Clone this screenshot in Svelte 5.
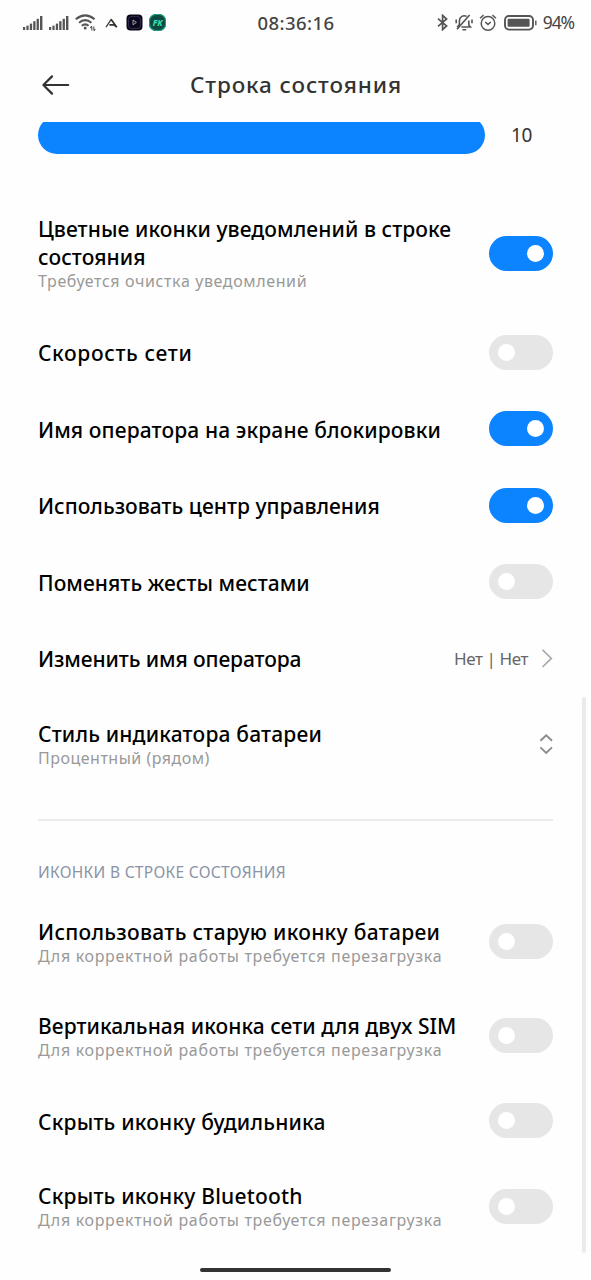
<script lang="ts">
	type Item = {
		title: string;
		sub?: string;
		kind: 'toggle' | 'link' | 'select';
		on?: boolean;
		value?: string;
		// letter spacing of the title and the summary, px
		track: number;
		subTrack?: number;
	};

	let general = $state<Item[]>([
		{ title: 'Цветные иконки уведомлений в строке состояния', sub: 'Требуется очистка уведомлений', kind: 'toggle', on: true, track: 0.08, subTrack: 0.62 },
		{ title: 'Скорость сети', kind: 'toggle', on: false, track: 0.65 },
		{ title: 'Имя оператора на экране блокировки', kind: 'toggle', on: true, track: 0.12 },
		{ title: 'Использовать центр управления', kind: 'toggle', on: true, track: 0.02 },
		{ title: 'Поменять жесты местами', kind: 'toggle', on: false, track: 0.06 },
		{ title: 'Изменить имя оператора', kind: 'link', value: 'Нет | Нет', track: -0.1 },
		{ title: 'Стиль индикатора батареи', sub: 'Процентный (рядом)', kind: 'select', track: 0.18, subTrack: 0.5 }
	]);

	let icons = $state<Item[]>([
		{ title: 'Использовать старую иконку батареи', sub: 'Для корректной работы требуется перезагрузка', kind: 'toggle', on: false, track: 0.3, subTrack: 0.68 },
		{ title: 'Вертикальная иконка сети для двух SIM', sub: 'Для корректной работы требуется перезагрузка', kind: 'toggle', on: false, track: 0.06, subTrack: 0.68 },
		{ title: 'Скрыть иконку будильника', kind: 'toggle', on: false, track: 0.2 },
		{ title: 'Скрыть иконку Bluetooth', sub: 'Для корректной работы требуется перезагрузка', kind: 'toggle', on: false, track: 0.2, subTrack: 0.68 }
	]);
</script>

{#snippet signal()}
	<svg width="20" height="14" viewBox="0 0 20 14" fill="#555">
		<rect x="0" y="11" width="2.2" height="3" />
		<rect x="3.4" y="9.6" width="2.2" height="4.4" />
		<rect x="6.8" y="7.6" width="2.3" height="6.4" />
		<rect x="10.2" y="5.2" width="2.3" height="8.8" />
		<rect x="13.6" y="2.8" width="2.3" height="11.2" />
		<rect x="17" y="0" width="2.4" height="14" />
	</svg>
{/snippet}

{#snippet row(item: Item)}
	<div class="row" class:tall={item.sub}>
		<div class="label">
			<div class="title" style:letter-spacing="{item.track}px">{item.title}</div>
			{#if item.sub}
				<div class="sub" style:letter-spacing="{item.subTrack}px">{item.sub}</div>
			{/if}
		</div>
		{#if item.kind === 'toggle'}
			<button class="toggle" class:on={item.on} aria-label={item.title} onclick={() => (item.on = !item.on)}>
				<span class="knob"></span>
			</button>
		{:else if item.kind === 'link'}
			<span class="value">{item.value}</span>
			<svg width="12" height="20" viewBox="0 0 12 20" fill="none" stroke="#a8a8a8" stroke-width="1.6">
				<path d="M1.5 1.8L10.4 10.4L1.5 19" />
			</svg>
		{:else}
			<svg width="14" height="22" viewBox="0 0 14 22" fill="none" stroke="#8c8c8c" stroke-width="1.9">
				<path d="M1.4 7.8L7.2 2.2L13 7.8M1.4 14.4L7.2 20L13 14.4" />
			</svg>
		{/if}
	</div>
{/snippet}

<div class="screen">
	<div class="statusbar">
		<div class="left">
			{@render signal()}
			{@render signal()}
			<svg class="wifi" width="22" height="18" viewBox="0 0 22 18" fill="none" stroke="#555" stroke-width="2.1">
				<path d="M0.8 5.2Q10.2 -2.4 19.6 5.2" />
				<path d="M4 8.7Q10.2 3.6 16.4 8.7" />
				<path d="M6.8 11.8Q10.2 9 13.6 11.8" />
				<circle cx="10.2" cy="14" r="1.5" fill="#555" stroke="none" />
				<path d="M16.8 16.6V12.4M15.2 14L16.8 12.2M18.8 12.4V16.6M20.4 15L18.8 16.8" stroke-width="1.1" />
			</svg>
			<svg class="caret" width="13" height="10" viewBox="0 0 13 10" fill="none" stroke="#333">
				<path d="M1 9.2L6.4 1.2" stroke-width="1.2" />
				<path d="M6 1.2L11.8 9.2L8.6 6.6L4.4 6.8" stroke-width="1.7" />
			</svg>
			<svg class="app" width="17" height="17" viewBox="0 0 17 17">
				<rect x="0.5" y="0.5" width="16" height="16" rx="4" fill="#0a0716" />
				<rect x="2.6" y="2.6" width="11.8" height="11.8" rx="2.6" fill="none" stroke="#34305e" stroke-width="0.9" />
				<path d="M7 6L10.4 8.4L7 10.8Z" fill="none" stroke="#b9a9c8" stroke-width="0.9" />
			</svg>
			<span class="fk">FK</span>
		</div>
		<div class="clock">08:36:16</div>
		<div class="right">
			<svg width="11" height="17" viewBox="0 0 11 17" fill="none" stroke="#555" stroke-width="1.7">
				<path d="M1 4.6L9.6 12L5.6 15.6V1.4L9.6 5L1 12.4" />
			</svg>
			<svg class="bell" width="18" height="17" viewBox="0 0 18 17" fill="none" stroke="#555" stroke-width="1.6">
				<path d="M6.4 13H15.4L13.8 11V6.4M11.6 2.4A4.8 4.8 0 0 0 4.4 6.4V10.6L2.2 13.2" />
				<path d="M7.4 15.8H11.2M1.2 5.4V9.2M17 5.4V9.2M2 15.2L14.6 1" />
			</svg>
			<svg class="alarm" width="18" height="17" viewBox="0 0 18 17" fill="none" stroke="#555" stroke-width="1.5">
				<circle cx="9" cy="9.4" r="6.8" />
				<path d="M6.2 8L9 10.4L11.8 8M1 4.2L4.6 1.1M17 4.2L13.4 1.1" />
			</svg>
			<svg class="battery" width="33" height="16" viewBox="0 0 33 16">
				<rect x="1" y="1" width="28" height="13.6" rx="4" fill="none" stroke="#555" stroke-width="1.9" />
				<rect x="3.6" y="3.8" width="22" height="8" rx="1.2" fill="#555" />
				<rect x="31" y="5.6" width="1.6" height="4.6" fill="#666" />
			</svg>
			<span class="percent">94%</span>
		</div>
	</div>

	<header>
		<svg class="back" width="28" height="20" viewBox="0 0 28 20" fill="none" stroke="#333" stroke-width="2.2" stroke-linecap="round" stroke-linejoin="round">
			<path d="M26.2 10H1.4M10 1.4L1.4 10L10 18.6" />
		</svg>
		<h1>Строка состояния</h1>
	</header>

	<main>
		<div class="slider">
			<div class="bar"></div>
			<span class="amount">10</span>
		</div>
		{#each general as item (item.title)}
			{@render row(item)}
		{/each}
		<hr />
		<h2>ИКОНКИ В СТРОКЕ СОСТОЯНИЯ</h2>
		{#each icons as item (item.title)}
			{@render row(item)}
		{/each}
		<div class="scrollbar"></div>
	</main>
	<div class="home"></div>
</div>

<style>
	:global(body) {
		background: #fefefe;
	}
	.screen {
		position: relative;
		display: flex;
		flex-direction: column;
		box-sizing: border-box;
		width: 591px;
		height: 1280px;
		overflow: hidden;
		background: #fefefe;
		font-family: 'Noto Sans', 'Open Sans', sans-serif;
		color: #000;
	}
	.statusbar {
		display: grid;
		grid-template-columns: 1fr auto 1fr;
		align-items: center;
		height: 45px;
		padding: 0 17px 0 18px;
		flex-shrink: 0;
		color: #444;
	}
	.left,
	.right {
		display: flex;
		align-items: center;
	}
	.left {
		gap: 6px;
		padding-left: 5px;
	}
	.right {
		justify-content: flex-end;
	}
	.caret {
		margin-left: 2px;
	}
	.app {
		margin-left: 2px;
	}
	.fk {
		width: 17px;
		height: 17px;
		border-radius: 7px;
		background: #0f4a42;
		box-shadow: inset 0 0 0 1px #19a583;
		color: #3fe0b4;
		font-size: 8.5px;
		font-weight: 700;
		font-style: italic;
		line-height: 17px;
		text-align: center;
	}
	.clock {
		font-size: 18.5px;
		font-weight: 500;
		line-height: 24px;
		letter-spacing: 0.4px;
	}
	.bell {
		margin-left: 7px;
	}
	.alarm {
		margin-left: 6px;
	}
	.battery {
		margin-left: 7px;
	}
	.percent {
		margin-left: 6px;
		margin-top: -2px;
		font-size: 17.5px;
		line-height: 24px;
		letter-spacing: -1.1px;
	}
	header {
		position: relative;
		display: flex;
		align-items: center;
		justify-content: center;
		height: 77px;
		padding-top: 1px;
		box-sizing: border-box;
		flex-shrink: 0;
	}
	.back {
		position: absolute;
		left: 42px;
		top: 30px;
	}
	h1 {
		margin: 0;
		padding: 1px 0 0 1px;
		font-size: 22.5px;
		font-weight: 500;
		line-height: 30px;
		letter-spacing: 0.9px;
		color: #333;
	}
	main {
		position: relative;
		height: 1131px;
		padding: 0 38px;
		overflow: hidden;
		flex-shrink: 0;
	}
	.slider {
		display: flex;
		align-items: center;
		height: 38px;
		margin: -6px 0 38px;
	}
	.bar {
		width: 447px;
		height: 38px;
		border-radius: 19px;
		background: #0d84ff;
	}
	.amount {
		margin-left: 26px;
		font-size: 19px;
		letter-spacing: -0.4px;
		color: #333;
	}
	.row {
		display: flex;
		align-items: center;
		box-sizing: border-box;
		min-height: 76.5px;
	}
	.row.tall {
		min-height: 94px;
		padding: 22px 0;
	}
	.label {
		flex: 1;
		padding-right: 20px;
		white-space: nowrap;
	}
	.title {
		max-width: 431px;
		padding-top: 1px;
		margin-bottom: -1px;
		white-space: normal;
		font-size: 21px;
		font-weight: 500;
		line-height: 28px;
	}
	.sub {
		font-size: 16px;
		line-height: 22px;
		color: #999;
	}
	.toggle {
		display: flex;
		align-items: center;
		width: 64px;
		height: 35px;
		padding: 0 9px;
		border: 0;
		border-radius: 18px;
		background: #e6e6e6;
		flex-shrink: 0;
	}
	.toggle.on {
		justify-content: flex-end;
		background: #0d84ff;
	}
	.knob {
		width: 17px;
		height: 17px;
		border-radius: 50%;
		background: #fff;
	}
	.value {
		margin-right: 13px;
		font-size: 17px;
		letter-spacing: -0.4px;
		color: #666;
	}
	hr {
		height: 2px;
		margin: 28px 0 0;
		border: 0;
		background: #ebebeb;
	}
	h2 {
		margin: 0;
		padding: 40px 0 12px;
		font-size: 15.5px;
		font-weight: 400;
		line-height: 22px;
		letter-spacing: 0.3px;
		color: #8b93a6;
	}
	.scrollbar {
		position: absolute;
		top: 575px;
		right: 5px;
		width: 4px;
		height: 556px;
		border-radius: 2px;
		background: #ebebeb;
	}
	.home {
		width: 191px;
		height: 4px;
		margin: 15px 0 0 200px;
		border-radius: 2px;
		background: #333;
		flex-shrink: 0;
	}
</style>
